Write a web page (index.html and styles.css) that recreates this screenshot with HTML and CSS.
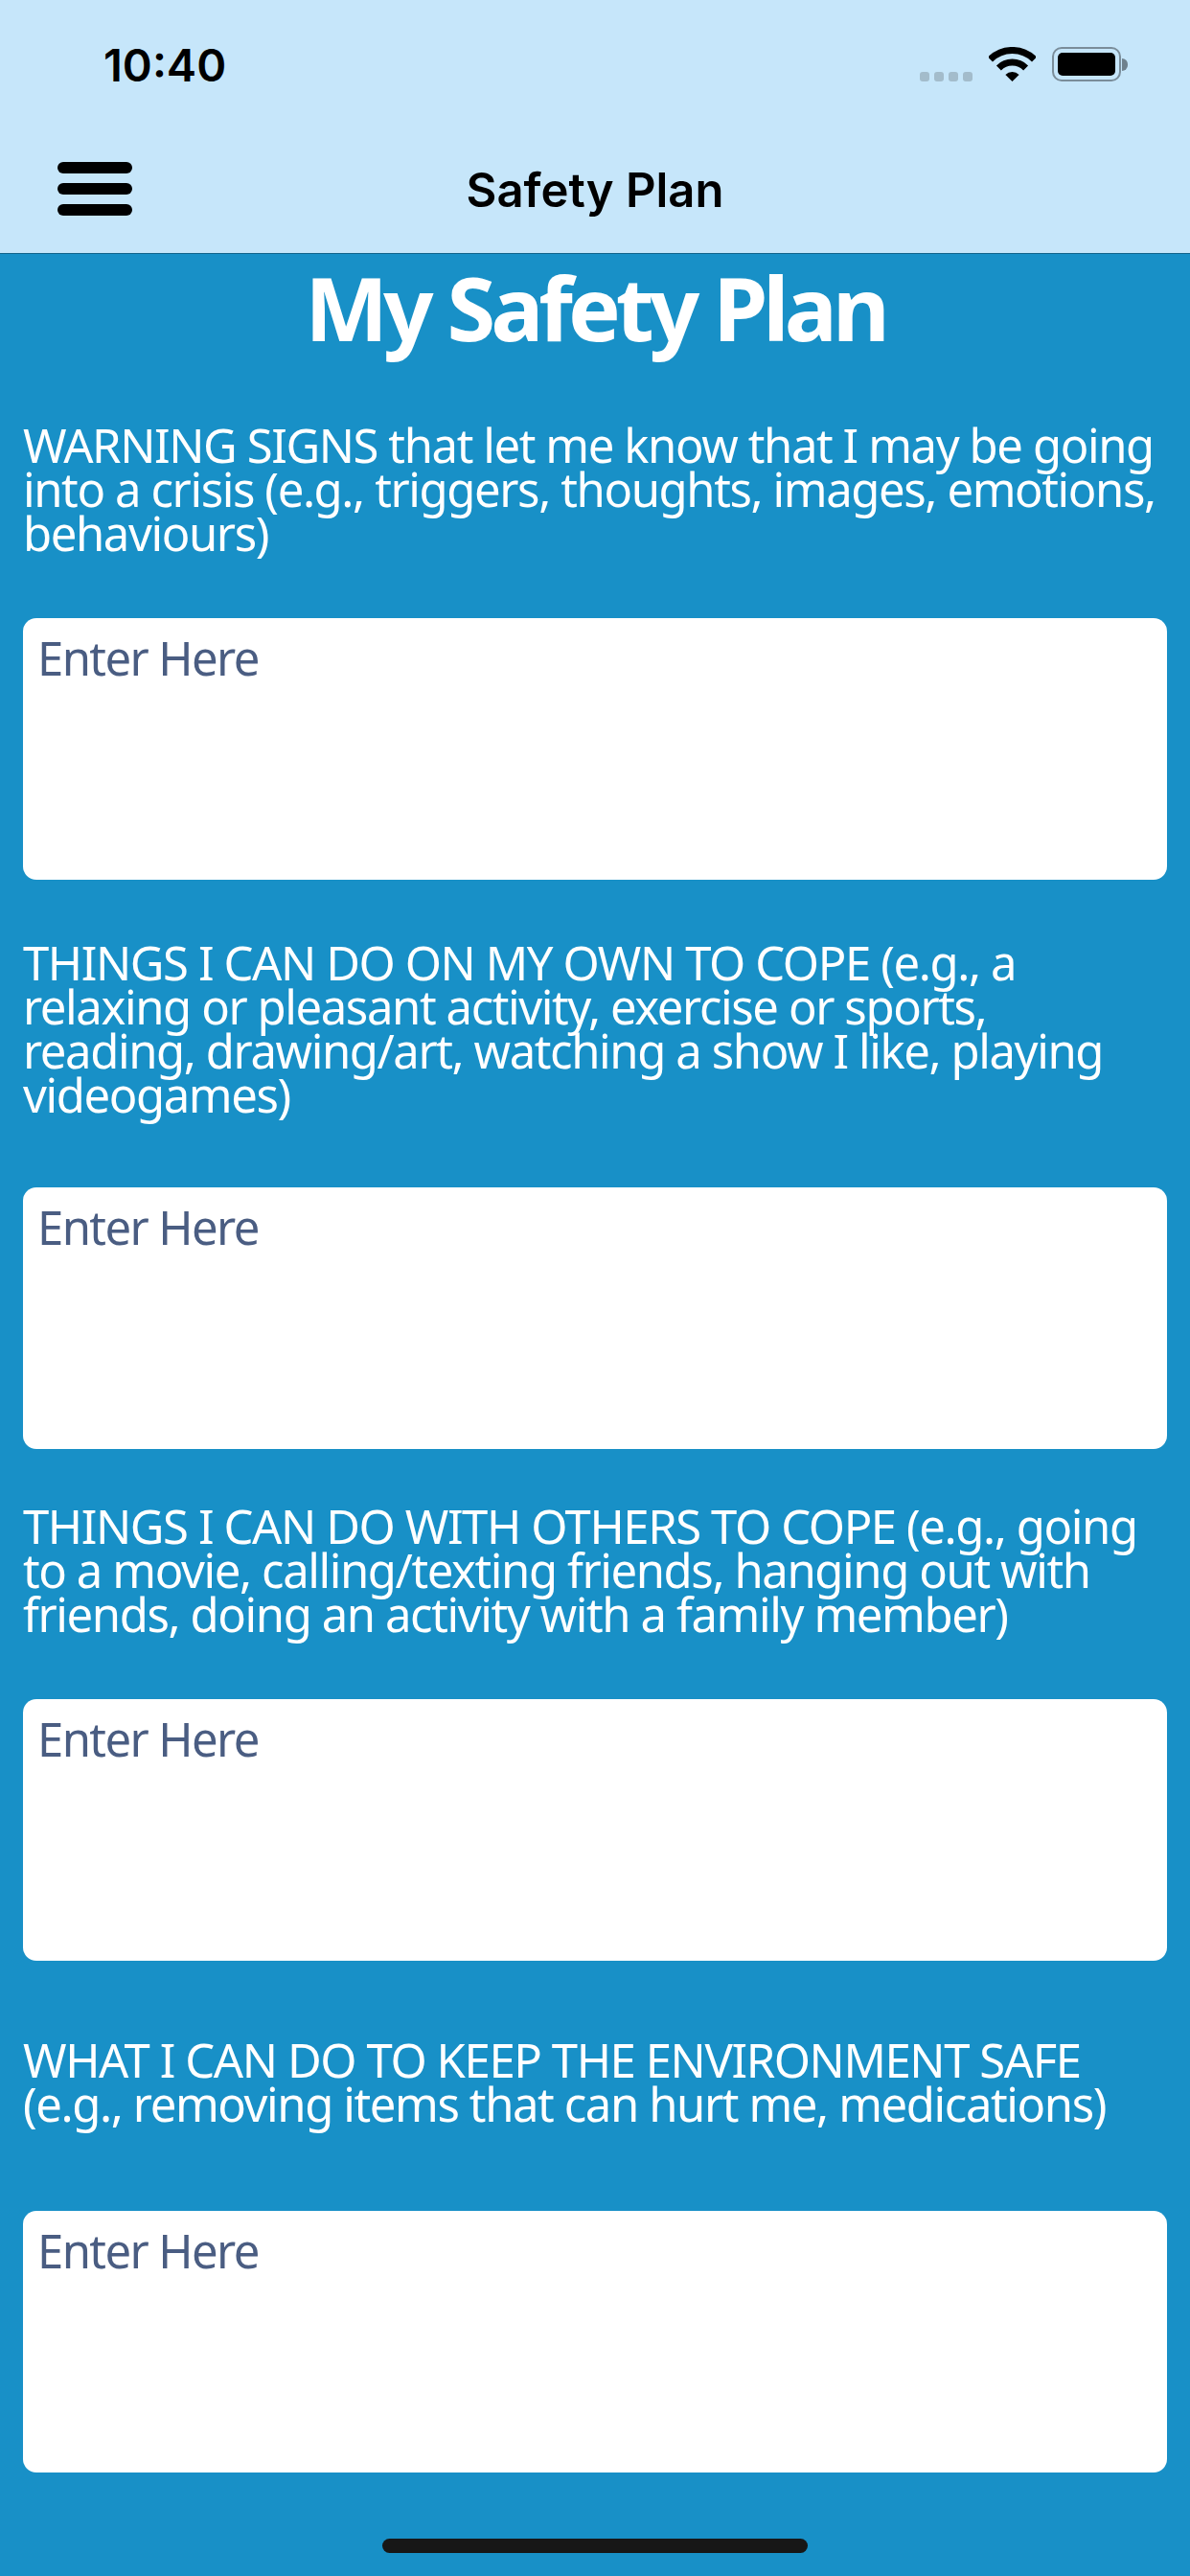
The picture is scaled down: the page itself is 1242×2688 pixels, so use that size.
FILE: index.html
```html
<!DOCTYPE html>
<html lang="en">
<head>
    <meta charset="UTF-8">
    <meta name="viewport" content="width=device-width, initial-scale=1.0">
    <title>Safety Plan</title>
    <link rel="stylesheet" href="styles.css">
</head>
<body>
    <header class="top">
        <div class="status-bar">
            <span class="time">10:40</span>
            <div class="status-icons">
                <div class="signal"><i></i><i></i><i></i><i></i></div>
                <svg class="wifi" width="49" height="36" viewBox="0 0 49 36">
                    <path d="M1.5 13 A32.5 32.5 0 0 1 47.5 13" fill="none" stroke="#000" stroke-width="7"/>
                    <path d="M10.4 21.9 A20 20 0 0 1 38.6 21.9" fill="none" stroke="#000" stroke-width="7"/>
                    <path d="M24.5 36 L17.4 28.9 A10 10 0 0 1 31.6 28.9 Z" fill="#000"/>
                </svg>
                <div class="battery"><div class="battery-fill"></div></div>
                <div class="battery-nub"></div>
            </div>
        </div>
        <div class="nav-bar">
            <div class="menu-icon"><i></i><i></i><i></i></div>
            <div class="nav-title">Safety Plan</div>
        </div>
    </header>

    <main class="content">
        <h1>My Safety Plan</h1>

        <section class="plan-item first">
            <p>WARNING SIGNS that let me know that I may be going<br>into a crisis (e.g., triggers, thoughts, images, emotions,<br>behaviours)</p>
            <div class="entry">Enter Here</div>
        </section>

        <section class="plan-item second">
            <p>THINGS I CAN DO ON MY OWN TO COPE (e.g., a<br>relaxing or pleasant activity, exercise or sports,<br>reading, drawing/art, watching a show I like, playing<br>videogames)</p>
            <div class="entry">Enter Here</div>
        </section>

        <section class="plan-item third">
            <p>THINGS I CAN DO WITH OTHERS TO COPE (e.g., going<br>to a movie, calling/texting friends, hanging out with<br>friends, doing an activity with a family member)</p>
            <div class="entry">Enter Here</div>
        </section>

        <section class="plan-item fourth">
            <p>WHAT I CAN DO TO KEEP THE ENVIRONMENT SAFE<br>(e.g., removing items that can hurt me, medications)</p>
            <div class="entry">Enter Here</div>
        </section>

        <div class="home-indicator"></div>
    </main>
</body>
</html>
```

FILE: styles.css
```css
* { box-sizing: border-box; }
html, body { margin: 0; padding: 0; }
body { width: 1242px; height: 2688px; background-color: #1890c7; font-family: "Noto Sans", "Open Sans", sans-serif; overflow: hidden; }

.top { height: 265px; background-color: #c6e6fa; border-bottom: 1px solid #12648c; color: #000; }
.status-bar { height: 140px; padding: 46px 65px 0 108px; display: flex; justify-content: space-between; align-items: flex-start; }
.time { font-family: Inter, sans-serif; font-size: 47px; font-weight: 600; line-height: 44px; }
.status-icons { display: flex; align-items: flex-start; padding-top: 3px; }
.signal { display: flex; gap: 5px; margin: 26px 17px 0 0; }
.signal i { width: 10px; height: 10px; border-radius: 3px; background-color: #a3bccb; }
.wifi { margin-right: 17px; }
.battery { width: 72px; height: 36px; padding: 4px; border: 2px solid #7a8d9a; border-radius: 10px; }
.battery-fill { width: 100%; height: 100%; background-color: #000; border-radius: 5px; }
.battery-nub { width: 6px; height: 13px; margin: 12px 0 0 1px; background-color: #6f818d; border-radius: 0 6px 6px 0; }

.nav-bar { height: 124px; display: flex; align-items: flex-start; justify-content: center; position: relative; }
.menu-icon { position: absolute; left: 60px; top: 29px; width: 78px; display: flex; flex-direction: column; gap: 10px; }
.menu-icon i { height: 12px; background-color: #000; border-radius: 6px; }
.nav-title { font-family: Inter, sans-serif; font-size: 49px; font-weight: 600; line-height: 58px; margin-top: 30px; }

.content { position: relative; height: 2423px; padding: 0 24px; color: #fff; }
h1 { margin: 0 0 8px; font-size: 92px; font-weight: 700; line-height: 112px; text-align: center; letter-spacing: -5px; }
.plan-item p { margin: 0; font-size: 49px; line-height: 46px; white-space: nowrap; letter-spacing: -1.4px; }
.entry { height: 273px; background-color: #fff; border-radius: 14px; padding: 11px 15px; color: #4a5d82; font-size: 49px; line-height: 60px; letter-spacing: -1.6px; }

.first { padding-top: 56px; }
.first p { height: 204px; }
.second { padding-top: 63px; }
.second p { height: 258px; }
.third { padding-top: 57px; }
.third p { height: 204px; }
.fourth { padding-top: 80px; }
.fourth p { height: 181px; }

.home-indicator { position: absolute; left: 399px; top: 2384px; width: 444px; height: 15px; background-color: #171717; border-radius: 8px; }
```
